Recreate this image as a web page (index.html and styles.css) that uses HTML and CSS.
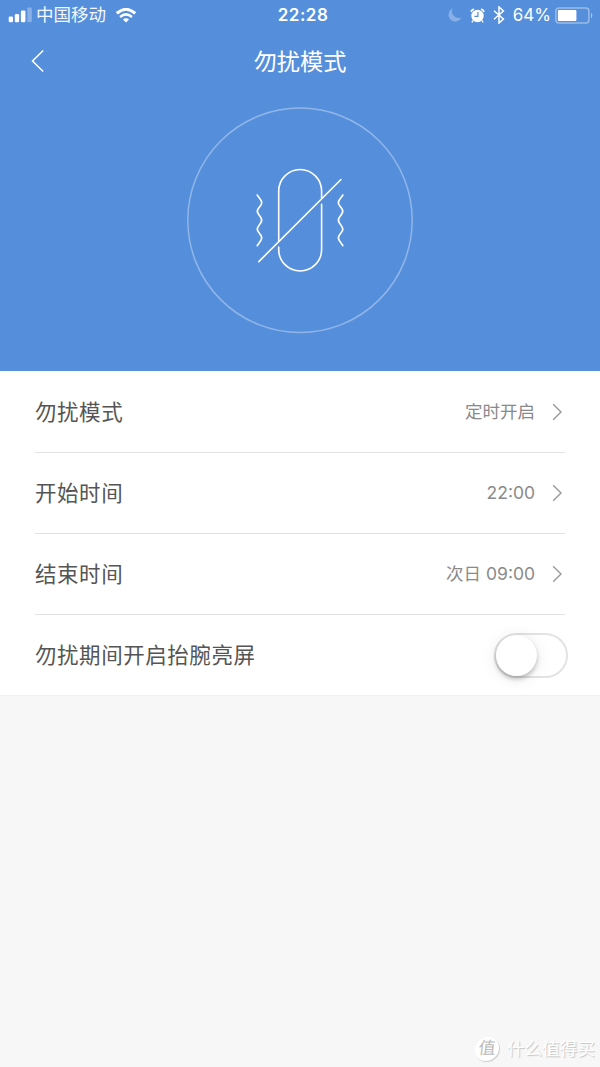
FILE: index.html
```html
<!DOCTYPE html>
<html lang="zh-CN">
<head>
  <meta charset="UTF-8">
  <meta name="viewport" content="width=device-width, initial-scale=1.0">
  <title>勿扰模式</title>
  <link rel="stylesheet" href="styles.css">
</head>
<body>
  <div class="hero">
    <div class="status-bar">
      <div class="status-left">
        <svg class="signal" width="24" height="16" viewBox="0 0 24 16" fill="#fff">
          <rect x="0.7" y="9.5" width="4.3" height="5.8" rx="1.2"/>
          <rect x="6.8" y="7" width="4.3" height="8.3" rx="1.2"/>
          <rect x="12.9" y="3.5" width="4.5" height="11.8" rx="1.2"/>
          <rect x="19.3" y="0.5" width="4.5" height="14.8" rx="1.2" opacity="0.3"/>
        </svg>
        <span class="carrier">中国移动</span>
        <svg class="wifi" width="20" height="15" viewBox="0 0 20 15" fill="none" stroke="#fff">
          <path d="M0.8 5.3 Q10 -2.7 19.2 5.3" stroke-width="2.9"/>
          <path d="M4.1 8.9 Q10 4 15.9 8.9" stroke-width="2.6"/>
          <path d="M6.9 11.5 Q10 8.9 13.1 11.5 L10 14.6 Z" fill="#fff" stroke="none"/>
        </svg>
      </div>
      <span class="clock">22:28</span>
      <div class="status-right">
        <svg class="moon" width="14" height="14" viewBox="0 0 14 14">
          <path d="M4.5 0.5 A6.8 6.8 0 1 0 13.5 9.6 A6.9 6.9 0 0 1 4.5 0.5 Z" fill="#fff" opacity="0.3"/>
        </svg>
        <svg class="alarm" width="15" height="15" viewBox="0 0 15 15">
          <circle cx="7.5" cy="8" r="6.2" fill="#fff"/>
          <path d="M0.8 3.8 A7.8 7.8 0 0 1 3.9 0.9 M11.1 0.9 A7.8 7.8 0 0 1 14.2 3.8" fill="none" stroke="#fff" stroke-width="1.7"/>
          <path d="M3 12.5 L1.9 14.3 M12 12.5 L13.1 14.3" stroke="#fff" stroke-width="1.4"/>
          <path d="M7.9 4 V8.4 H4.4" fill="none" stroke="#558fdc" stroke-width="1.2"/>
        </svg>
        <svg class="bluetooth" width="12" height="18" viewBox="0 0 12 18">
          <path d="M1 4.8 L10.4 13 L6 17 V1 L10.4 5 L1 13.2" fill="none" stroke="#fff" stroke-width="1.5"/>
        </svg>
        <span class="percent">64%</span>
        <svg class="battery" width="39" height="17" viewBox="0 0 39 17">
          <rect x="0.9" y="0.9" width="33" height="15.2" rx="3" fill="none" stroke="#fff" stroke-width="1.5" opacity="0.4"/>
          <rect x="2.9" y="3" width="18.5" height="11" rx="1" fill="#fff"/>
          <path d="M36 5.5 Q38.6 8.5 36 11.5 Z" fill="#fff" opacity="0.5"/>
        </svg>
      </div>
    </div>
    <div class="nav-bar">
      <svg class="back" width="14" height="24" viewBox="0 0 14 24">
        <path d="M12.2 1.5 L1.5 12 L12.2 22.5" fill="none" stroke="#fff" stroke-width="1.5"/>
      </svg>
      <h1 class="title">勿扰模式</h1>
    </div>
    <!-- band with vibration waves, crossed out -->
    <svg class="hero-icon" width="230" height="230" viewBox="185 105 230 230" fill="none" stroke="#fff" stroke-width="1.6" stroke-linecap="round">
      <circle cx="300" cy="220.3" r="112.2" stroke-width="1.5" opacity="0.35"/>
      <path d="M278.7 241 V191 A21.45 21.45 0 0 1 321.6 191 V198"/>
      <path d="M321.6 204.3 V249.5 A21.45 21.45 0 0 1 278.7 249.5 V247"/>
      <path d="M258.8 261.6 L341 179.5"/>
      <path d="M257.2 195 L260.8 200 Q262.6 202.7 260.8 205.2 L258.2 208.8 Q256.4 211.3 258.2 213.8 L260.8 217.5 Q262.6 220.2 260.8 222.8 L258.2 226.6 Q256.4 229.2 258.2 231.6 L260.8 235.3 Q262.6 238 260.8 240.5 L257.2 245.7"/>
      <path d="M342.9 195 L339.3 200 Q337.5 202.7 339.3 205.2 L341.9 208.8 Q343.7 211.3 341.9 213.8 L339.3 217.5 Q337.5 220.2 339.3 222.8 L341.9 226.6 Q343.7 229.2 341.9 231.6 L339.3 235.3 Q337.5 238 339.3 240.5 L342.9 245.7"/>
    </svg>
  </div>

  <div class="list">
    <div class="row">
      <span class="label">勿扰模式</span>
      <span class="value">定时开启</span>
      <svg class="arrow" width="11" height="18" viewBox="0 0 11 18"><path d="M1.2 1.3 L9 9 L1.2 16.7"/></svg>
    </div>
    <div class="row">
      <span class="label">开始时间</span>
      <span class="value">22:00</span>
      <svg class="arrow" width="11" height="18" viewBox="0 0 11 18"><path d="M1.2 1.3 L9 9 L1.2 16.7"/></svg>
    </div>
    <div class="row">
      <span class="label">结束时间</span>
      <span class="value">次日 09:00</span>
      <svg class="arrow" width="11" height="18" viewBox="0 0 11 18"><path d="M1.2 1.3 L9 9 L1.2 16.7"/></svg>
    </div>
    <div class="row">
      <span class="label">勿扰期间开启抬腕亮屏</span>
      <div class="switch"><div class="knob"></div></div>
    </div>
  </div>

  <div class="watermark">
    <span class="badge">值</span>
    <span class="brand">什么值得买</span>
  </div>
</body>
</html>
```
FILE: styles.css
```css
* {
  box-sizing: border-box;
}
body {
  margin: 0;
  height: 1067px;
  display: flex;
  flex-direction: column;
  background: #f7f7f7;
  font-family: Inter, "Noto Sans CJK SC", sans-serif;
  overflow: hidden;
}
svg {
  display: block;
  flex: none;
}
.hero {
  height: 371px;
  background: #558fdc;
  color: #fff;
}
.status-bar {
  height: 30px;
  display: grid;
  grid-template-columns: 1fr auto 1fr;
  grid-template-rows: 30px;
  align-items: center;
  padding: 0 6px 0 8px;
}
.status-left,
.status-right {
  display: flex;
  align-items: center;
}
.status-right {
  justify-content: flex-end;
}
.carrier {
  font-size: 17.5px;
  line-height: 30px;
  margin-left: 4px;
  color: #f4f8fd;
}
.wifi {
  margin-left: 10px;
}
.clock {
  font-size: 17px;
  font-weight: 600;
  letter-spacing: 0.5px;
  line-height: 30px;
  margin-left: 4px;
}
.alarm {
  margin-left: 8px;
}
.bluetooth {
  margin-left: 8px;
}
.percent {
  font-size: 17px;
  line-height: 30px;
  margin-left: 8px;
}
.battery {
  margin-left: 4px;
}
.nav-bar {
  height: 62px;
  display: grid;
  grid-template-columns: 1fr auto 1fr;
  align-items: center;
  padding: 0 31px;
}
.title {
  margin: 0;
  padding-top: 1px;
  font-size: 23.2px;
  font-weight: 400;
  line-height: 34px;
}
.hero-icon {
  margin: 13px auto 0;
}
.list {
  height: 325px;
  padding: 1px 35px 0;
  background: #fff;
  border-bottom: 1px solid #f0f0f0;
}
.row {
  height: 81px;
  display: flex;
  align-items: center;
  border-bottom: 1px solid #e2e2e2;
}
.row:last-child {
  border-bottom: none;
}
.label {
  flex: 1;
  padding-bottom: 1px;
  font-size: 21.5px;
  letter-spacing: 0.55px;
  line-height: 32px;
  color: #555;
}
.value {
  font-size: 17.5px;
  line-height: 26px;
  color: #8a8a8a;
}
.arrow {
  margin: 0 2px 0 17px;
  fill: none;
  stroke: #999;
  stroke-width: 1.4;
}
.switch {
  width: 74px;
  height: 45px;
  margin-right: -3px;
  border: 2px solid #e3e3e3;
  border-radius: 23px;
}
.knob {
  width: 41px;
  height: 41px;
  border-radius: 50%;
  background: #fff;
  box-shadow: 0 3px 4px rgba(0, 0, 0, 0.22), 0 2px 16px rgba(0, 0, 0, 0.1);
}
.watermark {
  display: flex;
  align-items: center;
  justify-content: flex-end;
  margin-top: auto;
  height: 36px;
  padding-right: 5px;
}
.badge {
  width: 24px;
  height: 24px;
  border-radius: 50%;
  background: #fff;
  box-shadow: 1px 1px 1px #ccc;
  color: #bbb;
  font-size: 17px;
  line-height: 23px;
  text-align: center;
  transform: skewX(-6deg);
}
.brand {
  margin-left: 8px;
  font-size: 17.6px;
  line-height: 26px;
  color: #fff;
  text-shadow: 1px 1px 1px #c4c4c4;
}
```
